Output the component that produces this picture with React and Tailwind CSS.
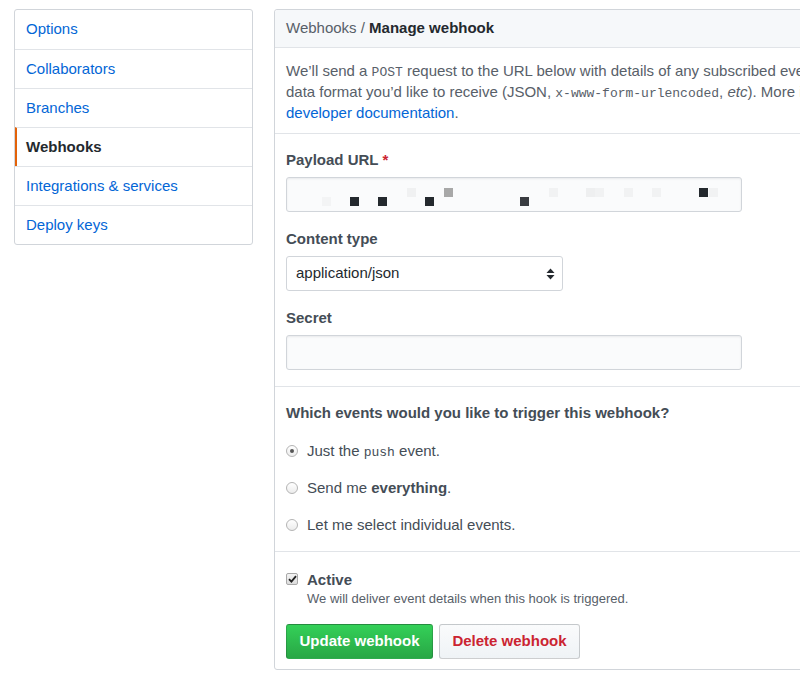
import React from 'react';

const menu = [
  { label: 'Options' },
  { label: 'Collaborators' },
  { label: 'Branches' },
  { label: 'Webhooks', active: true },
  { label: 'Integrations & services' },
  { label: 'Deploy keys' },
];

// pixelated blur blocks inside the payload URL field (x relative to input left, y relative to input top)
const blocks = [
  { x: 35, y: 19, c: 'bg-[#f3f4f5]' },
  { x: 63, y: 19, c: 'bg-[#24292e]' },
  { x: 91, y: 19, c: 'bg-[#24292e]' },
  { x: 120, y: 10, c: 'bg-[#f0f1f2]' },
  { x: 138, y: 19, c: 'bg-[#24292e]' },
  { x: 157, y: 10, c: 'bg-[#a8a8a8]' },
  { x: 233, y: 19, c: 'bg-[#393c41]' },
  { x: 262, y: 10, c: 'bg-[#f1f2f3]' },
  { x: 299, y: 10, c: 'bg-[#eeeff0]' },
  { x: 308, y: 10, c: 'bg-[#f1f2f3]' },
  { x: 337, y: 10, c: 'bg-[#f1f2f3]' },
  { x: 365, y: 10, c: 'bg-[#f1f2f3]' },
  { x: 412, y: 10, c: 'bg-[#24292e]' },
  { x: 422, y: 10, c: 'bg-[#f1f2f3]' },
];

const mono = "font-['Liberation_Mono',monospace] text-[13px] leading-none";

const Radio = ({ checked }) => (
  <span className="w-[12px] h-[12px] rounded-full border border-[#b4b4b4] bg-gradient-to-b from-white to-[#ececec] flex items-center justify-center shrink-0">
    {checked && <span className="w-[4px] h-[4px] rounded-full bg-[#555]" />}
  </span>
);

const Field = ({ label, required, children }) => (
  <div className="flex flex-col">
    <div className="text-[15px] leading-[21px] font-bold text-[#444d56] mb-[7px]">
      {label}
      {required && <span className="text-[#cb2431]"> *</span>}
    </div>
    {children}
  </div>
);

const App = () => {
  return (
    <div className="w-full h-[684px] overflow-hidden bg-white font-['Liberation_Sans',Arial,sans-serif] text-[#24292e]">
      <div className="flex items-start pl-[14px] pt-[9px] gap-[21px]">
        <nav className="w-[239px] shrink-0 border border-[#d1d5da] rounded-[3px] bg-white">
          {menu.map((item, i) => (
            <div
              key={item.label}
              className={`h-[39px] flex items-center px-[11px] text-[15px] ${i > 0 ? 'border-t border-[#e1e4e8]' : ''} ${
                item.active ? 'font-bold text-[#24292e] border-l-[2px] border-l-[#e36209] pl-[9px]' : 'text-[#0366d6]'
              }`}
            >
              {item.label}
            </div>
          ))}
        </nav>

        <div className="w-[600px] shrink-0 border border-[#d1d5da] rounded-[3px] bg-white">
          <div className="h-[38px] flex items-center px-[11px] bg-[#f6f8fa] border-b border-[#e1e4e8] text-[15px] rounded-t-[3px]">
            <span className="text-[#586069]">Webhooks /&nbsp;</span>
            <span className="font-bold">Manage webhook</span>
          </div>

          <div className="px-[11px] pt-[12px] pb-[10px] border-b border-[#e1e4e8] text-[15px] leading-[21px] text-[#586069] whitespace-nowrap">
            <div>
              We’ll send a <code className={mono}>POST</code> request to the URL below with details of any subscribed events. You can also specify which
            </div>
            <div>
              data format you’d like to receive (JSON, <code className={mono}>x-www-form-urlencoded</code>, <em>etc</em>). More information can be found in our
            </div>
            <div>
              <a className="text-[#0366d6]">developer documentation</a>.
            </div>
          </div>

          <div className="px-[11px] pt-[15px] pb-[16px] border-b border-[#e1e4e8] flex flex-col gap-[16px]">
            <Field label="Payload URL" required>
              <div className="relative w-[456px] h-[35px] border border-[#d1d5da] rounded-[3px] bg-[#fafbfc] shadow-[inset_0_1px_2px_rgba(27,31,35,0.075)]">
                {blocks.map((b, i) => (
                  <span
                    key={i}
                    className={`absolute w-[9px] h-[9px] ${b.c}`}
                    style={{ left: b.x, top: b.y }}
                  />
                ))}
              </div>
            </Field>
            <Field label="Content type">
              <div className="w-[277px] h-[35px] border border-[#d1d5da] rounded-[3px] bg-white flex items-center justify-between pl-[9px] pr-[7px] text-[15px]">
                <span>application/json</span>
                <svg width="9" height="12" viewBox="0 0 9 12">
                  <path d="M4.5 0.5 L8.5 5 L0.5 5 Z" fill="#24292e" />
                  <path d="M4.5 11.5 L8.5 7 L0.5 7 Z" fill="#24292e" />
                </svg>
              </div>
            </Field>
            <Field label="Secret">
              <div className="w-[456px] h-[35px] border border-[#d1d5da] rounded-[3px] bg-[#fafbfc] shadow-[inset_0_1px_2px_rgba(27,31,35,0.075)]" />
            </Field>
          </div>

          <div className="px-[11px] pt-[15px] pb-[16px] border-b border-[#e1e4e8] text-[15px] leading-[21px]">
            <div className="font-bold text-[#444d56] mb-[17px]">Which events would you like to trigger this webhook?</div>
            <div className="flex flex-col gap-[16px] text-[#444d56]">
              <div className="flex items-center gap-[9px] h-[21px]">
                <Radio checked />
                <span>
                  Just the <code className={mono}>push</code> event.
                </span>
              </div>
              <div className="flex items-center gap-[9px] h-[21px]">
                <Radio />
                <span>
                  Send me <b>everything</b>.
                </span>
              </div>
              <div className="flex items-center gap-[9px] h-[21px]">
                <Radio />
                <span>Let me select individual events.</span>
              </div>
            </div>
          </div>

          <div className="px-[11px] pt-[17px] pb-[10px]">
            <div className="flex items-start gap-[9px]">
              <span className="mt-[4px] w-[12px] h-[12px] rounded-[2px] border border-[#a8a8a8] bg-gradient-to-b from-[#f4f4f4] to-[#dcdcdc] flex items-center justify-center shrink-0">
                <svg width="9" height="8" viewBox="0 0 9 8">
                  <path d="M1 4.2 L3.4 6.6 L8 1.2" stroke="#222" strokeWidth="1.8" fill="none" />
                </svg>
              </span>
              <div className="flex flex-col">
                <span className="text-[15px] leading-[21px] font-bold text-[#444d56]">Active</span>
                <span className="text-[13px] leading-[18px] text-[#586069]">We will deliver event details when this hook is triggered.</span>
              </div>
            </div>
            <div className="flex gap-[6px] mt-[16px]">
              <button className="w-[147px] h-[35px] rounded-[3px] border border-[rgba(27,31,35,0.2)] bg-gradient-to-b from-[#34d058] to-[#28a745] text-white font-bold text-[15px]">
                Update webhook
              </button>
              <button className="w-[141px] h-[35px] rounded-[3px] border border-[rgba(27,31,35,0.2)] bg-gradient-to-b from-[#fafbfc] to-[#eff3f6] text-[#cb2431] font-bold text-[15px]">
                Delete webhook
              </button>
            </div>
          </div>
        </div>
      </div>
    </div>
  );
};

export default App;
